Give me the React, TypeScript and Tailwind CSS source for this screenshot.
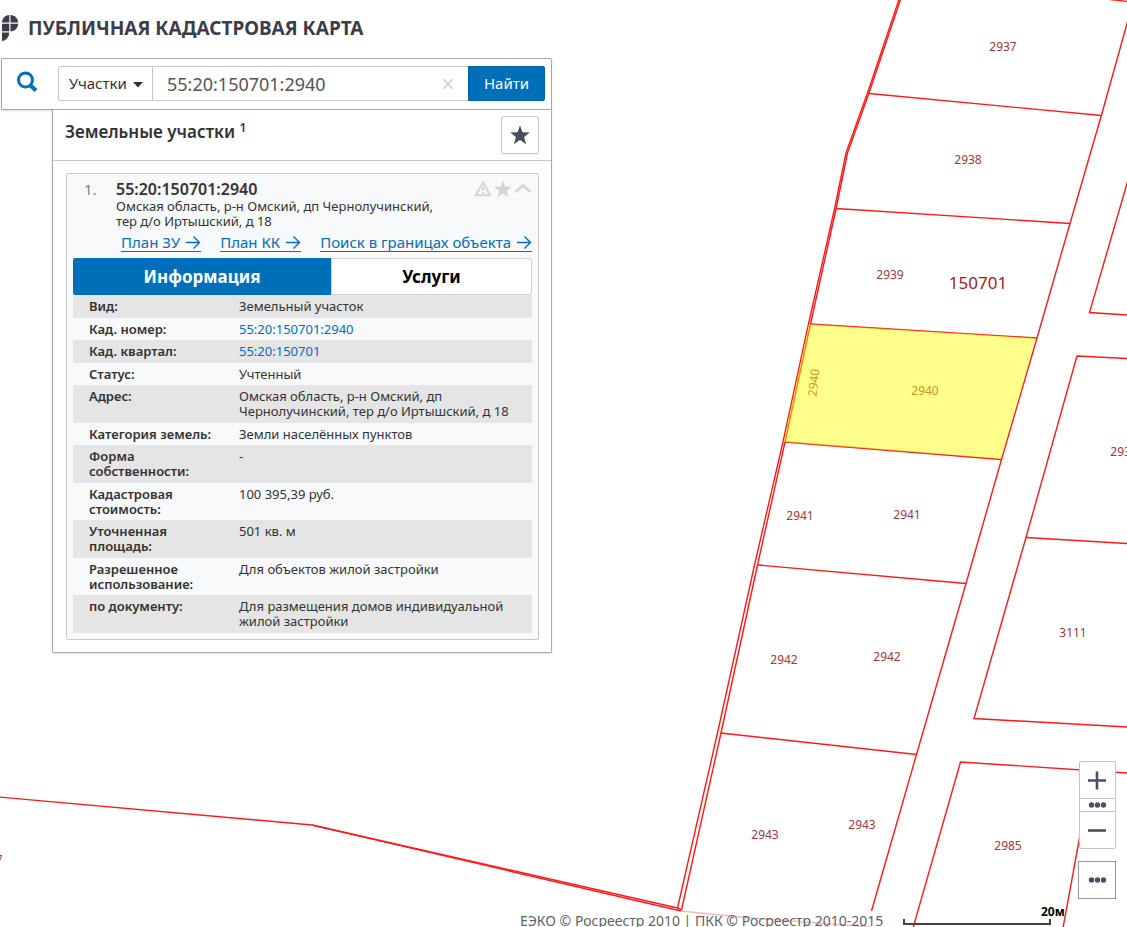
import { useState } from 'react';

const LINE = '#ff1a1a';

const boundaries = [
  '901,-2 869,93 847.5,153 836,209 810.5,324 785,442 757.5,565 721,733 681.5,910',
  '899.5,-2 867.5,93 846,153 834.5,209 808.5,324 783,442 754.5,565 717.5,733 677.5,908',
  '869,93.5 1101.5,115.5',
  '836,208.5 1070,223.5',
  '810,324 1037,338',
  '785,442 1001.5,459.5',
  '757.5,565 966,583.5',
  '720.5,733 916.5,754.5',
  '1128,20 1101.5,115 1070,223.5 1037,338 1001.5,459.5 966,583.5 916.5,754.5 871.5,911',
  '1110,-0.5 1128,1.5',
  '1128,180 1089.5,312.5 1128,315',
  '1128,358.5 1077,356 1026,537.5 974,718.5 1128,727',
  '1026,537.5 1128,543.5',
  '1128,773 960.5,762 913,928',
  '1092,770 1063,928',
  '-1,797 312,825 677.5,908 681.5,910',
  '312,825 681,911',
];

const labels: [string, number, number][] = [
  ['2937', 1003, 51],
  ['2938', 968, 164],
  ['2939', 890, 279],
  ['2940', 925, 395],
  ['2941', 800, 520],
  ['2941', 907, 519],
  ['2942', 784, 664],
  ['2942', 887, 661],
  ['2943', 765, 839],
  ['2943', 862, 829],
  ['2933', 1124, 456],
  ['3111', 1073, 637],
  ['2985', 1008, 850],
  ['2937', -11, 864],
];

function CadastralMap() {
  return (
    <svg className="absolute inset-0 h-full w-full" aria-label="Карта участков">
      <g fill="none" stroke={LINE} strokeWidth="1.4">
        {boundaries.map((points) => (
          <polyline key={points} points={points} />
        ))}
        <polyline points="681,911 740,917 871,927" stroke="#ffb9b9" />
      </g>
      <g fill="#9c3a3a" fontSize="12" textAnchor="middle">
        {labels.map(([text, x, y]) => (
          <text key={`${x}-${y}`} x={x} y={y}>
            {text}
          </text>
        ))}
        <text transform="translate(818 383) rotate(-84)">2940</text>
      </g>
      <text x="978" y="289" fill="#a01c24" fontSize="17" textAnchor="middle">
        150701
      </text>
      <polygon points="809,324 1036,338 1001,459 783.5,442" fill="#ffff00" fillOpacity="0.46" />
    </svg>
  );
}

function Logo() {
  return (
    <svg className="h-7 w-5 shrink-0" viewBox="0 0 20 28" fill="#3c3d49" aria-hidden="true">
      <path d="M8.300 1v7.500H1C1.300 4.200 4 1.300 8.300 1z" />
      <path d="M9.500 1c4.500.2 7.300 3.200 7.700 7.500H9.500z" />
      <path d="M1 9.700h7.300v7.600H1z" />
      <path d="M9.500 9.700h7.700c-.4 4.400-3.200 7.600-7.700 7.600z" />
      <path d="M1 18.500h7.300C8 23 5.500 26.500 1 27z" />
    </svg>
  );
}

function SearchIcon() {
  return (
    <svg className="h-6 w-6" viewBox="0 0 24 24" fill="none" stroke="#006fba" aria-hidden="true">
      <circle cx="10.500" cy="10" r="7" strokeWidth="3" />
      <path d="M15.500 15.500l5.500 5" strokeWidth="4" />
    </svg>
  );
}

function Star({ className }: { className: string }) {
  return (
    <svg className={className} viewBox="0 0 20 20" fill="currentColor" aria-hidden="true">
      <path d="M10 .5l2.500 6.700 7.300.3-5.700 4.500 2 7.200L10 15.100l-6.100 4.100 2-7.200L.2 7.500l7.300-.3z" />
    </svg>
  );
}

function ArrowLink({ children }: { children: string }) {
  return (
    <a href="#" className="flex h-[19px] items-center gap-[5px] border-b border-[#006fba] whitespace-nowrap">
      {children}
      <svg className="h-4 w-4" viewBox="0 0 16 16" fill="none" stroke="currentColor" strokeWidth="1.400" aria-hidden="true">
        <path d="M1 8.500h13.500M8.500 2.500l6 6-6 6" />
      </svg>
    </a>
  );
}

const rows: { label: string; value: string; link?: boolean }[] = [
  { label: 'Вид:', value: 'Земельный участок' },
  { label: 'Кад. номер:', value: '55:20:150701:2940', link: true },
  { label: 'Кад. квартал:', value: '55:20:150701', link: true },
  { label: 'Статус:', value: 'Учтенный' },
  { label: 'Адрес:', value: 'Омская область, р-н Омский, дп Чернолучинский, тер д/о Иртышский, д 18' },
  { label: 'Категория земель:', value: 'Земли населённых пунктов' },
  { label: 'Форма собственности:', value: '-' },
  { label: 'Кадастровая стоимость:', value: '100 395,39 руб.' },
  { label: 'Уточненная площадь:', value: '501 кв. м' },
  { label: 'Разрешенное использование:', value: 'Для объектов жилой застройки' },
  { label: 'по документу:', value: 'Для размещения домов индивидуальной жилой застройки' },
];

function InfoTable() {
  return (
    <table className="w-full table-fixed border-collapse text-[13px] leading-[15px]">
      <colgroup>
        <col className="w-[150px]" />
        <col />
      </colgroup>
      <tbody>
        {rows.map((row) => (
          <tr
            key={row.label}
            className="align-top odd:bg-[#e5e5e5] odd:[&>*]:pb-1 even:[&>*]:pb-[3px]"
          >
            <th scope="row" className="pt-1 pr-2 pl-4 text-left font-semibold">
              {row.label}
            </th>
            <td className="pt-1 pr-4 pl-4">
              {row.link ? (
                <a href="#" className="text-[#006fba]">
                  {row.value}
                </a>
              ) : (
                row.value
              )}
            </td>
          </tr>
        ))}
      </tbody>
    </table>
  );
}

function ParcelCard() {
  return (
    <article className="rounded-xs border border-[#c8cacd] bg-[#f8f9fb] px-[6px] pb-[6px]">
      <div className="flex items-start pt-[6px] pl-[11px]">
        <span className="w-8 text-[15px] leading-[19px] text-[#808080]">1.</span>
        <div className="flex-1">
          <h2 className="text-base leading-[19px] font-semibold">55:20:150701:2940</h2>
          <p className="max-w-[340px] text-[13px] leading-[15px]">
            Омская область, р-н Омский, дп Чернолучинский, тер д/о Иртышский, д 18
          </p>
        </div>
        <div className="flex items-center gap-[2px] text-[#d3d5d8]">
          <button type="button" aria-label="Предупреждение">
            <svg className="h-[18px] w-[18px]" viewBox="0 0 18 18" fill="none" stroke="currentColor" aria-hidden="true">
              <path d="M9 2.500l7.300 12.800H1.700z" strokeWidth="2" />
              <path d="M9 7v4M9 12v2" strokeWidth="2" />
            </svg>
          </button>
          <button type="button" aria-label="В избранное">
            <Star className="h-[18px] w-[18px]" />
          </button>
          <button type="button" aria-label="Свернуть">
            <svg className="h-[18px] w-[18px]" viewBox="0 0 18 18" fill="none" stroke="currentColor" strokeWidth="2.500" aria-hidden="true">
              <path d="M1.500 12L9 5.500l7.500 6.500" />
            </svg>
          </button>
        </div>
      </div>
      <nav className="mt-1 mb-[6px] flex justify-end gap-[19px] text-[15px] text-[#006fba]">
        <ArrowLink>План ЗУ</ArrowLink>
        <ArrowLink>План КК</ArrowLink>
        <ArrowLink>Поиск в границах объекта</ArrowLink>
      </nav>
      <div className="flex h-[37px] text-[17px] font-bold">
        <button type="button" className="w-[258px] rounded-l-xs bg-[#006fba] text-white">
          Информация
        </button>
        <button type="button" className="flex-1 rounded-r-xs border border-[#d0d2d4] bg-white text-black">
          Услуги
        </button>
      </div>
      <InfoTable />
    </article>
  );
}

function Dots() {
  return (
    <svg className="h-[6px] w-[19px]" viewBox="0 0 18 6" fill="#4b505e" aria-hidden="true">
      <circle cx="3" cy="3" r="2.700" />
      <circle cx="9" cy="3" r="2.700" />
      <circle cx="15" cy="3" r="2.700" />
    </svg>
  );
}

function ZoomControls() {
  return (
    <div className="absolute right-[11px] bottom-7 flex flex-col items-end gap-3">
      <div className="flex w-[37px] flex-col divide-y divide-[#c4c4c4] rounded-xs border border-[#c4c4c4] bg-white">
        <button type="button" aria-label="Приблизить" className="flex h-[37px] items-center justify-center">
          <svg className="h-[19px] w-[19px]" viewBox="0 0 19 19" stroke="#4b505e" strokeWidth="2.600" aria-hidden="true">
            <path d="M0 9.500h18M9 .5v18" />
          </svg>
        </button>
        <button type="button" aria-label="Масштаб" className="flex h-[13px] items-center justify-center">
          <Dots />
        </button>
        <button type="button" aria-label="Отдалить" className="flex h-9 items-center justify-center">
          <svg className="h-[19px] w-[19px]" viewBox="0 0 19 19" stroke="#4b505e" strokeWidth="2.600" aria-hidden="true">
            <path d="M0 9.500h18" />
          </svg>
        </button>
      </div>
      <button
        type="button"
        aria-label="Ещё"
        className="flex h-[38px] w-[38px] items-center justify-center border border-[#999] bg-white"
      >
        <Dots />
      </button>
    </div>
  );
}

export default function App() {
  const [query, setQuery] = useState('55:20:150701:2940');

  return (
    <div className="relative min-h-screen overflow-hidden bg-white font-['Noto_Sans',sans-serif] text-[#333]">
      <CadastralMap />
      <div className="relative w-full max-w-[552px] pl-px">
        <header className="flex h-[58px] items-center gap-[7px] pb-[2px]">
          <Logo />
          <h1 className="text-[19px] font-bold whitespace-nowrap text-[#3c3d49]">ПУБЛИЧНАЯ КАДАСТРОВАЯ КАРТА</h1>
        </header>
        <form
          className="flex h-[52px] items-center rounded-tr-xs border border-[#a8a8a8] bg-white pr-[6px] pb-px shadow-sm"
          onSubmit={(event) => event.preventDefault()}
        >
          <span className="flex w-14 shrink-0 justify-center pr-[6px] pb-1">
            <SearchIcon />
          </span>
          <div className="relative h-[35px] w-[95px] shrink-0">
            <select
              aria-label="Тип объекта"
              className="h-full w-full appearance-none rounded-l-xs border border-[#c8c8c8] bg-white pl-[10px] text-[15px]"
            >
              <option>Участки</option>
            </select>
            <svg className="pointer-events-none absolute top-4 right-[10px] h-[6px] w-[10px]" viewBox="0 0 10 6" fill="#333" aria-hidden="true">
              <path d="M0 0h10L5 5.500z" />
            </svg>
          </div>
          <div className="relative h-[35px] min-w-0 flex-1">
            <input
              aria-label="Поиск"
              value={query}
              onChange={(event) => setQuery(event.target.value)}
              className="h-full w-full border-y border-[#c8c8c8] bg-white pr-8 pl-[14px] text-lg text-[#555] outline-none"
            />
            <button
              type="button"
              aria-label="Очистить"
              onClick={() => setQuery('')}
              className="absolute top-3 right-[14px]"
            >
              <svg className="h-3 w-3" viewBox="0 0 12 12" stroke="#ccc" strokeWidth="1.500" aria-hidden="true">
                <path d="M1 1l10 10M11 1L1 11" />
              </svg>
            </button>
          </div>
          <button
            type="submit"
            className="h-[35px] w-[77px] shrink-0 rounded-r-xs border border-[#0063a8] bg-[#006fba] text-[15px] text-white"
          >
            Найти
          </button>
        </form>
        <section className="ml-[51px] rounded-b-xs border border-t-0 border-[#a8a8a8] bg-white shadow-sm">
          <div className="flex h-[51px] items-center justify-between border-b border-[#c8c8c8] px-3">
            <h2 className="pb-[6px] text-[17px] leading-5 font-semibold">
              Земельные участки <sup className="text-xs">1</sup>
            </h2>
            <button
              type="button"
              aria-label="Избранное"
              className="flex h-[38px] w-[38px] items-center justify-center rounded-xs border border-[#c8c8c8] bg-white text-[#4b505e]"
            >
              <Star className="h-5 w-5" />
            </button>
          </div>
          <div className="py-3 pr-3 pl-[13px]">
            <ParcelCard />
          </div>
        </section>
      </div>
      <footer className="absolute right-0 bottom-0 flex w-[607px] items-end">
        <p className="w-[383px] text-sm leading-3 whitespace-nowrap text-[#5f6368]">
          ЕЭКО © Росреестр 2010 | ПКК © Росреестр 2010-2015
        </p>
        <div className="mb-[2px] h-[6px] w-[148px] border-x-2 border-b-2 border-[#444]" />
        <span className="-ml-[10px] pb-[7px] text-xs leading-4 font-bold text-black">20м</span>
      </footer>
      <ZoomControls />
    </div>
  );
}
